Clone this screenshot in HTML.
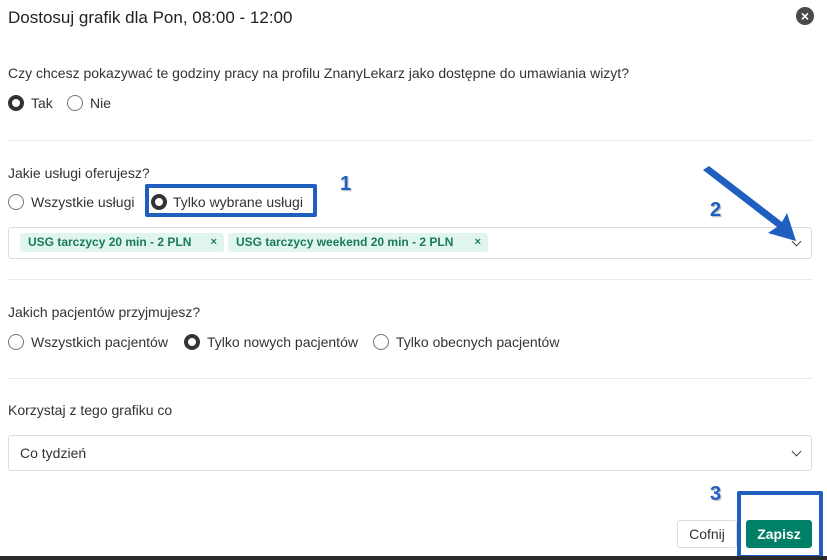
<!DOCTYPE html><html><head><style>
body{margin:0;width:827px;height:560px;background:#fff;font-family:"Liberation Sans",sans-serif;color:#333;position:relative;overflow:hidden;font-size:14px}
.a{position:absolute;white-space:nowrap}
.r{position:absolute;width:14px;height:14px;border:1px solid #777;border-radius:50%;box-sizing:content-box}
.rc{position:absolute;width:8px;height:8px;border:4px solid #333;border-radius:50%;background:#fff}
.hr{position:absolute;left:8px;width:804px;height:1px;background:#eaeaea}
.box{position:absolute;left:8px;width:802px;border:1px solid #ddd;border-radius:3px;background:#fff}
.tag{position:absolute;top:5px;height:19px;box-sizing:border-box;background:#dff5ee;border-radius:3px;color:#1a7a5c;font-weight:bold;font-size:12px;line-height:19px;padding-left:8px}
.chev{position:absolute;width:6px;height:6px;border-right:1.3px solid #444;border-bottom:1.3px solid #444;transform:rotate(45deg)}
.num{position:absolute;color:#1f5fbf;font-weight:bold;font-size:20px;text-shadow:0 0 2px #fff,1px 1px 1px #999}
</style></head><body>
<div class="a" style="left:8px;top:8px;font-size:17px;color:#222">Dostosuj grafik dla Pon, 08:00 - 12:00</div>
<div class="a" style="left:796px;top:7px;width:18px;height:18px;border-radius:50%;background:#4a4a4a;color:#fff;font-size:14px;line-height:18px;text-align:center;font-weight:bold">×</div>
<div class="a" style="left:8px;top:65px">Czy chcesz pokazywać te godziny pracy na profilu ZnanyLekarz jako dostępne do umawiania wizyt?</div>
<div class="rc" style="left:8px;top:95px"></div><div class="a" style="left:31px;top:95px">Tak</div>
<div class="r" style="left:67px;top:95px"></div><div class="a" style="left:90px;top:95px">Nie</div>
<div class="hr" style="top:140px"></div>
<div class="a" style="left:8px;top:165px">Jakie usługi oferujesz?</div>
<div class="r" style="left:8px;top:194px"></div><div class="a" style="left:31px;top:194px">Wszystkie usługi</div>
<div class="a" style="left:145px;top:184px;width:164px;height:25px;border:4px solid #1f5fbf;border-radius:2px"></div>
<div class="rc" style="left:151px;top:194px"></div><div class="a" style="left:173px;top:194px">Tylko wybrane usługi</div>
<div class="num" style="left:340px;top:173px">1</div>
<div class="num" style="left:710px;top:199px">2</div>
<div class="box" style="top:227px;height:30px">
<div class="tag" style="left:11px;width:204px">USG tarczycy 20 min - 2 PLN<span style="position:absolute;right:7px;font-size:11px">×</span></div>
<div class="tag" style="left:219px;width:260px">USG tarczycy weekend 20 min - 2 PLN<span style="position:absolute;right:7px;font-size:11px">×</span></div>
<div class="chev" style="left:784px;top:10px"></div></div>
<svg class="a" style="left:0;top:0" width="827" height="560"><polygon points="703,170 709,166 782,222 787,213 796,241 768,233 777,227" fill="#1f5fbf"/></svg>
<div class="hr" style="top:279px"></div>
<div class="a" style="left:8px;top:304px">Jakich pacjentów przyjmujesz?</div>
<div class="r" style="left:8px;top:334px"></div><div class="a" style="left:31px;top:334px">Wszystkich pacjentów</div>
<div class="rc" style="left:184px;top:334px"></div><div class="a" style="left:207px;top:334px">Tylko nowych pacjentów</div>
<div class="r" style="left:373px;top:334px"></div><div class="a" style="left:396px;top:334px">Tylko obecnych pacjentów</div>
<div class="hr" style="top:378px"></div>
<div class="a" style="left:8px;top:402px">Korzystaj z tego grafiku co</div>
<div class="box" style="top:435px;height:34px"><div class="a" style="left:11px;top:9px">Co tydzień</div><div class="chev" style="left:784px;top:12px"></div></div>
<div class="num" style="left:710px;top:483px">3</div>
<div class="a" style="left:677px;top:520px;width:58px;height:26px;border:1px solid #ddd;border-radius:3px;text-align:center;line-height:26px">Cofnij</div>
<div class="a" style="left:737px;top:491px;width:78px;height:60px;border:4px solid #1f5fbf;border-radius:2px"></div>
<div class="a" style="left:746px;top:520px;width:66px;height:28px;background:#008066;border-radius:3px;color:#fff;font-weight:bold;text-align:center;line-height:28px">Zapisz</div>
<div class="a" style="left:0;top:556px;width:827px;height:4px;background:#2a2a2a"></div>
</body></html>
